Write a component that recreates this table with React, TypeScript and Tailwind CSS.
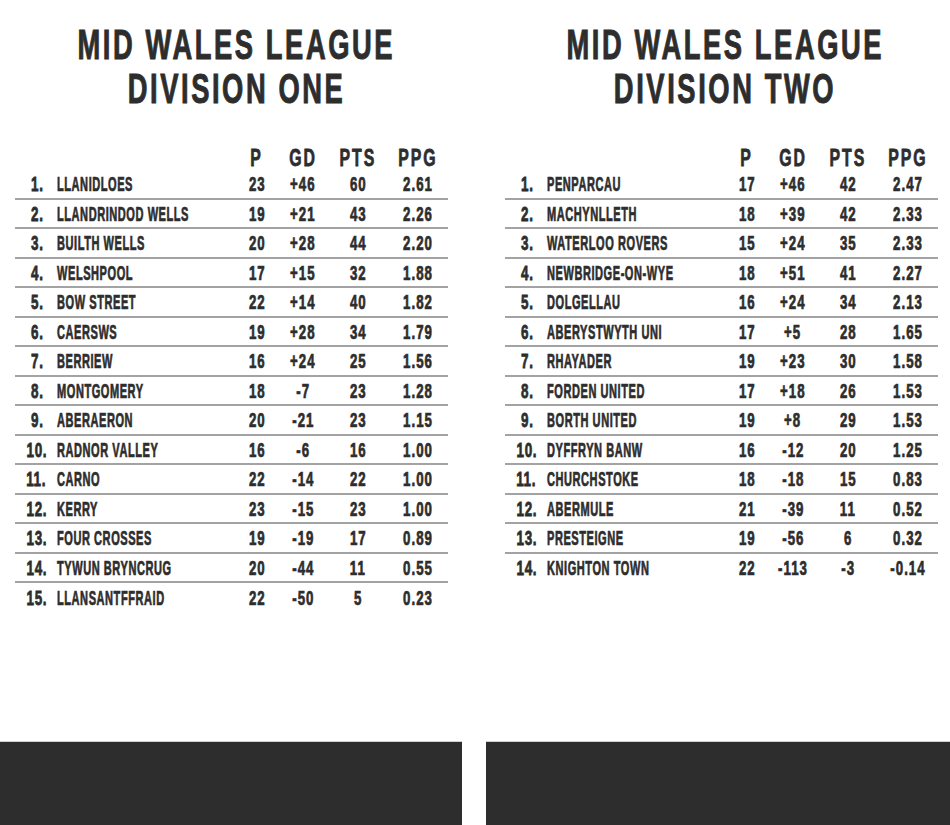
import React from "react";

type Row = [number, string, string, string, string, string];

const div1: Row[] = [
  [1, "LLANIDLOES", "23", "+46", "60", "2.61"],
  [2, "LLANDRINDOD WELLS", "19", "+21", "43", "2.26"],
  [3, "BUILTH WELLS", "20", "+28", "44", "2.20"],
  [4, "WELSHPOOL", "17", "+15", "32", "1.88"],
  [5, "BOW STREET", "22", "+14", "40", "1.82"],
  [6, "CAERSWS", "19", "+28", "34", "1.79"],
  [7, "BERRIEW", "16", "+24", "25", "1.56"],
  [8, "MONTGOMERY", "18", "-7", "23", "1.28"],
  [9, "ABERAERON", "20", "-21", "23", "1.15"],
  [10, "RADNOR VALLEY", "16", "-6", "16", "1.00"],
  [11, "CARNO", "22", "-14", "22", "1.00"],
  [12, "KERRY", "23", "-15", "23", "1.00"],
  [13, "FOUR CROSSES", "19", "-19", "17", "0.89"],
  [14, "TYWUN BRYNCRUG", "20", "-44", "11", "0.55"],
  [15, "LLANSANTFFRAID", "22", "-50", "5", "0.23"],
];

const div2: Row[] = [
  [1, "PENPARCAU", "17", "+46", "42", "2.47"],
  [2, "MACHYNLLETH", "18", "+39", "42", "2.33"],
  [3, "WATERLOO ROVERS", "15", "+24", "35", "2.33"],
  [4, "NEWBRIDGE-ON-WYE", "18", "+51", "41", "2.27"],
  [5, "DOLGELLAU", "16", "+24", "34", "2.13"],
  [6, "ABERYSTWYTH UNI", "17", "+5", "28", "1.65"],
  [7, "RHAYADER", "19", "+23", "30", "1.58"],
  [8, "FORDEN UNITED", "17", "+18", "26", "1.53"],
  [9, "BORTH UNITED", "19", "+8", "29", "1.53"],
  [10, "DYFFRYN BANW", "16", "-12", "20", "1.25"],
  [11, "CHURCHSTOKE", "18", "-18", "15", "0.83"],
  [12, "ABERMULE", "21", "-39", "11", "0.52"],
  [13, "PRESTEIGNE", "19", "-56", "6", "0.32"],
  [14, "KNIGHTON TOWN", "22", "-113", "-3", "-0.14"],
];

const COLS = "grid grid-cols-[29px_193px_40px_52px_58px_61px]";

function Num({ v }: { v: string }) {
  return (
    <div className="text-center">
      <span className="inline-block origin-center scale-x-[0.68] whitespace-nowrap text-[19.5px] leading-[20px] tracking-[1.5px] [-webkit-text-stroke:0.7px_#2d2d2d]">
        {v}
      </span>
    </div>
  );
}

function Head({ v }: { v: string }) {
  return (
    <div className="text-center">
      <span className="inline-block origin-center scale-x-[0.66] whitespace-nowrap text-[24px] leading-[24px] tracking-[3px] [-webkit-text-stroke:0.8px_#2d2d2d]">
        {v}
      </span>
    </div>
  );
}

function Table({ rows }: { rows: Row[] }) {
  return (
    <div className="w-[433px]">
      <div className={`${COLS} h-[24px] items-center`}>
        <div />
        <div />
        <Head v="P" />
        <Head v="GD" />
        <Head v="PTS" />
        <Head v="PPG" />
      </div>
      <div>
        {rows.map((r) => (
          <div
            key={r[0]}
            className={`${COLS} h-[29.5px] items-center border-b-2 border-[#a3a3a3] pt-[4px] last:border-b-0`}
          >
            <div className="text-right">
              <span className="inline-block origin-right scale-x-[0.64] whitespace-nowrap text-[21px] leading-[20px] tracking-[1px] [-webkit-text-stroke:0.8px_#2d2d2d]">
                {r[0]}.
              </span>
            </div>
            <div className="pl-[13px]">
              <span className="inline-block origin-left scale-x-[0.565] whitespace-nowrap text-[19.5px] leading-[20px] tracking-[1px] [-webkit-text-stroke:0.7px_#2d2d2d]">
                {r[1]}
              </span>
            </div>
            <Num v={r[2]} />
            <Num v={r[3]} />
            <Num v={r[4]} />
            <Num v={r[5]} />
          </div>
        ))}
      </div>
    </div>
  );
}

function Panel({
  second,
  rows,
  titlePad,
  tablePad,
}: {
  second: string;
  rows: Row[];
  titlePad: string;
  tablePad: string;
}) {
  return (
    <div className="flex h-full min-w-0 flex-col">
      <div
        className={`flex flex-col items-center pt-[23px] text-[42px] leading-[44px] tracking-[4px] [-webkit-text-stroke:1px_#2d2d2d] ${titlePad}`}
      >
        <span className="inline-block shrink-0 origin-center scale-x-[0.65] whitespace-nowrap">
          MID WALES LEAGUE
        </span>
        <span className="inline-block shrink-0 origin-center scale-x-[0.65] whitespace-nowrap">
          {second}
        </span>
      </div>
      <div className={`mt-[35px] ${tablePad}`}>
        <Table rows={rows} />
      </div>
      <div className="flex-1" />
      <div className="h-[84px] border-t border-[#d0d0d0] bg-[#2d2d2d]" />
    </div>
  );
}

export default function App() {
  return (
    <div className="h-[825px] w-[950px] overflow-hidden bg-white font-['Liberation_Sans',Arial,sans-serif] font-bold text-[#2d2d2d]">
      <div className="grid h-full grid-cols-[462px_464px] gap-x-[24px]">
        <Panel second="DIVISION ONE" rows={div1} titlePad="pl-[11px]" tablePad="pl-[15px]" />
        <Panel second="DIVISION TWO" rows={div2} titlePad="pl-[14px]" tablePad="pl-[19px]" />
      </div>
    </div>
  );
}
